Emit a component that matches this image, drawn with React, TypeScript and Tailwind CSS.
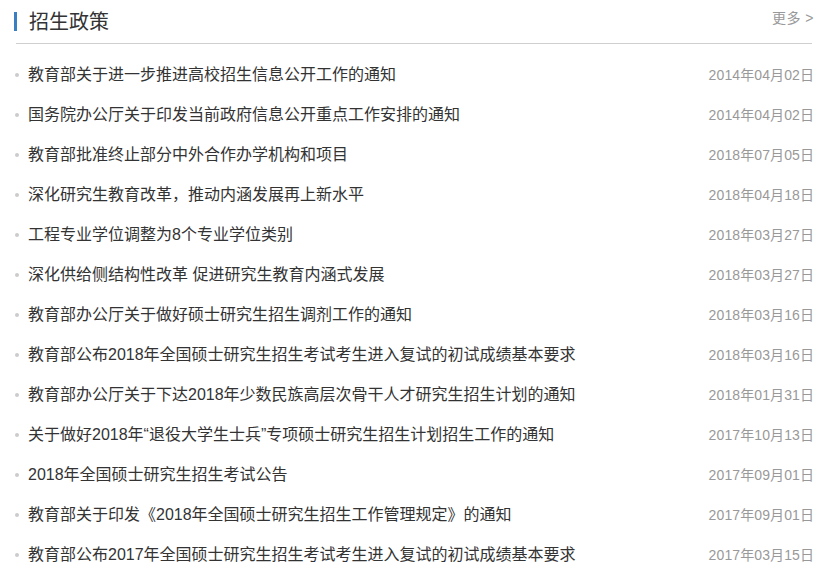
const items: { title: string; date: string }[] = [
  { title: "教育部关于进一步推进高校招生信息公开工作的通知", date: "2014年04月02日" },
  { title: "国务院办公厅关于印发当前政府信息公开重点工作安排的通知", date: "2014年04月02日" },
  { title: "教育部批准终止部分中外合作办学机构和项目", date: "2018年07月05日" },
  { title: "深化研究生教育改革，推动内涵发展再上新水平", date: "2018年04月18日" },
  { title: "工程专业学位调整为8个专业学位类别", date: "2018年03月27日" },
  { title: "深化供给侧结构性改革 促进研究生教育内涵式发展", date: "2018年03月27日" },
  { title: "教育部办公厅关于做好硕士研究生招生调剂工作的通知", date: "2018年03月16日" },
  { title: "教育部公布2018年全国硕士研究生招生考试考生进入复试的初试成绩基本要求", date: "2018年03月16日" },
  { title: "教育部办公厅关于下达2018年少数民族高层次骨干人才研究生招生计划的通知", date: "2018年01月31日" },
  { title: "关于做好2018年“退役大学生士兵”专项硕士研究生招生计划招生工作的通知", date: "2017年10月13日" },
  { title: "2018年全国硕士研究生招生考试公告", date: "2017年09月01日" },
  { title: "教育部关于印发《2018年全国硕士研究生招生工作管理规定》的通知", date: "2017年09月01日" },
  { title: "教育部公布2017年全国硕士研究生招生考试考生进入复试的初试成绩基本要求", date: "2017年03月15日" },
];

export default function App() {
  return (
    <div
      className="w-[824px] h-[578px] bg-white overflow-hidden pl-[14px] pr-[10px] pt-[8px]"
      style={{ fontFamily: '"Liberation Sans", "Noto Sans CJK SC", sans-serif' }}
    >
      <div className="flex items-center justify-between h-[27px]">
        <div className="flex items-center">
          <span className="w-[3px] h-[19px] bg-[#3a7fc1] mr-[12px]" />
          <span className="text-[20px] leading-[22px] text-[#333]">招生政策</span>
        </div>
        <span className="text-[14px] text-[#999] self-start mt-0 tracking-[0.5px]">更多 &gt;</span>
      </div>
      <div className="mt-[8px] ml-[2px] mr-[2px] h-px bg-[#cfcfcf]" />
      <ul className="mt-[11px]">
        {items.map((it, i) => (
          <li key={i} className="flex items-center justify-between h-[40px]">
            <div className="flex items-center">
              <span className="w-[4px] h-[4px] rounded-full bg-[#cccccc] ml-[1px] mr-[9px]" />
              <span className="text-[16px] text-[#333]">{it.title}</span>
            </div>
            <span className="text-[14px] text-[#999] tracking-[0.1px]">{it.date}</span>
          </li>
        ))}
      </ul>
    </div>
  );
}
